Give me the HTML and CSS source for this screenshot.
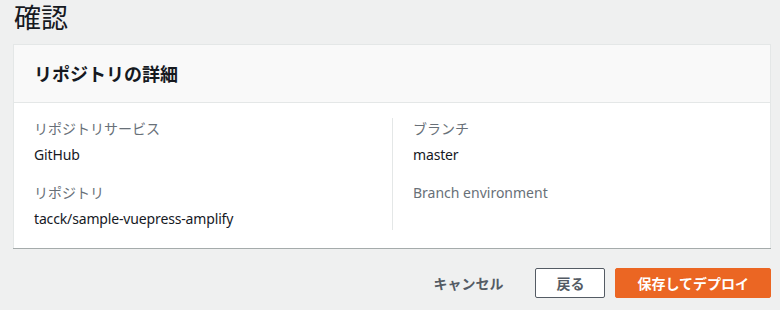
FILE: index.html
```html
<!DOCTYPE html>
<html lang="ja">
<head>
  <meta charset="UTF-8">
  <title>確認</title>
  <meta name="viewport" content="width=device-width, initial-scale=1.0">
  <link rel="stylesheet" href="styles.css">
</head>
<body>
  <div class="page">
    <h1 class="page-title">確認</h1>

    <div class="card">
      <div class="card-header">
        <h2>リポジトリの詳細</h2>
      </div>
      <div class="card-body">
        <div class="column">
          <div class="item">
            <div class="label">リポジトリサービス</div>
            <div class="value">GitHub</div>
          </div>
          <div class="item">
            <div class="label">リポジトリ</div>
            <div class="value">tacck/sample-vuepress-amplify</div>
          </div>
        </div>
        <div class="column column-right">
          <div class="item">
            <div class="label">ブランチ</div>
            <div class="value">master</div>
          </div>
          <div class="item">
            <div class="label">Branch environment</div>
          </div>
        </div>
      </div>
    </div>

    <div class="actions">
      <button class="btn btn-link">キャンセル</button>
      <button class="btn btn-normal">戻る</button>
      <button class="btn btn-primary">保存してデプロイ</button>
    </div>
  </div>
</body>
</html>
```

FILE: styles.css
```css
body {
  margin: 0;
  background: #eff0f0;
  color: #16191f;
  font-family: "Noto Sans", "Noto Sans CJK JP", sans-serif;
  font-size: 14px;
}
.page {
  padding: 0 9px 0 13px;
}
.page-title {
  margin: 0 0 8px 1px;
  font-size: 27px;
  font-weight: 400;
  line-height: 36px;
  color: #16191f;
}
.card {
  background: #fff;
  border: 1px solid #e4e7e7;
  border-bottom: none;
  box-shadow: 0 1px 0 0 #a5abab;
}
.card-header {
  background: #f9f9f9;
  border-bottom: 1px solid #e4e7e7;
  height: 57px;
  display: flex;
  align-items: center;
  padding: 0 20px;
}
.card-header h2 {
  margin: 0;
  font-size: 18px;
  font-weight: 700;
  line-height: 24px;
}
.card-body {
  display: grid;
  grid-template-columns: 1fr 1fr;
  padding: 15px 20px 18px;
}
.column {
  display: flex;
  flex-direction: column;
  gap: 16px;
}
.column-right {
  border-left: 1px solid #e4e7e7;
  padding-left: 20px;
}
.label {
  color: #687078;
  line-height: 22px;
}
.value {
  margin-top: 4px;
  line-height: 22px;
  letter-spacing: -0.15px;
}
.actions {
  display: flex;
  justify-content: flex-end;
  align-items: center;
  gap: 10px;
  margin-top: 20px;
}
.btn {
  font-family: inherit;
  font-size: 14px;
  font-weight: 700;
  height: 30px;
  border-radius: 2px;
  cursor: pointer;
}
.btn-link {
  background: none;
  border: 1px solid transparent;
  color: #545b64;
  padding: 0 21px;
}
.btn-normal {
  background: #fff;
  border: 1px solid #545b64;
  color: #545b64;
  padding: 0 20px;
}
.btn-primary {
  background: #eb6623;
  border: 1px solid #eb6623;
  color: #fff;
  padding: 0 21px;
}
```
